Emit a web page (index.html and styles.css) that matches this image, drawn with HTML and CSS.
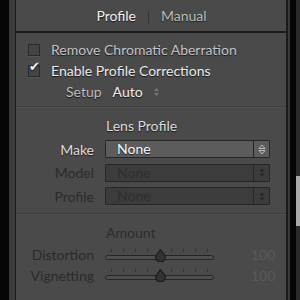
FILE: index.html
```html
<!DOCTYPE html>
<html lang="en">
<head>
  <meta charset="UTF-8" />
  <title>Lens Corrections</title>
  <link rel="stylesheet" href="styles.css">
</head>
<body>

  <div class="edge-black"></div>
  <div class="edge-gray"></div>

  <div class="panel">

    <!-- tabs -->
    <div class="tabs">
      <span class="tab active">Profile</span>
      <span class="tab-sep"></span>
      <span class="tab">Manual</span>
    </div>

    <!-- checkboxes -->
    <div class="section checks">
      <label class="check dim">
        <span class="box"></span>
        Remove Chromatic Aberration
      </label>
      <label class="check">
        <span class="box"><span class="tick">&#10004;</span></span>
        Enable Profile Corrections
      </label>
      <div class="setup">
        <span class="setup-label">Setup</span>
        <span class="setup-value">Auto</span>
        <svg class="updown" width="7" height="10" viewBox="0 0 7 10">
          <path d="M3.5 1 L6 4 H1 Z M3.5 9 L6 6 H1 Z" fill="#777"/>
        </svg>
      </div>
    </div>

    <!-- lens profile -->
    <div class="section lens">
      <div class="row">
        <span class="label"></span>
        <span class="heading">Lens Profile</span>
      </div>
      <div class="row">
        <span class="label">Make</span>
        <div class="select">
          <span class="select-text">None</span>
          <span class="select-arrows">
            <svg width="8" height="11" viewBox="0 0 8 11">
              <path d="M4 1 L7 4.5 H1 Z M4 10 L7 6.5 H1 Z" fill="none" stroke="#bbb" stroke-width="1"/>
            </svg>
          </span>
        </div>
      </div>
      <div class="row off">
        <span class="label">Model</span>
        <div class="select">
          <span class="select-text">None</span>
          <span class="select-arrows">
            <svg width="8" height="11" viewBox="0 0 8 11">
              <path d="M4 1.5 L6.5 4.5 H1.5 Z M4 9.5 L6.5 6.5 H1.5 Z" fill="#222"/>
            </svg>
          </span>
        </div>
      </div>
      <div class="row off">
        <span class="label">Profile</span>
        <div class="select">
          <span class="select-text">None</span>
          <span class="select-arrows">
            <svg width="8" height="11" viewBox="0 0 8 11">
              <path d="M4 1.5 L6.5 4.5 H1.5 Z M4 9.5 L6.5 6.5 H1.5 Z" fill="#222"/>
            </svg>
          </span>
        </div>
      </div>
    </div>

    <!-- amount -->
    <div class="section amount">
      <div class="row">
        <span class="label"></span>
        <span class="heading">Amount</span>
      </div>
      <div class="row">
        <span class="label">Distortion</span>
        <div class="slider">
          <div class="ticks">
            <i></i><i></i><i></i><i></i><i></i><i></i><i></i><i></i><i></i>
          </div>
          <div class="track"></div>
          <svg class="thumb" width="13" height="13" viewBox="0 0 13 13">
            <path d="M6.5 0.8 L11 6.5 A4.8 4.8 0 1 1 2 6.5 Z" fill="#333" stroke="#1c1c1c" stroke-width="1.2"/>
          </svg>
        </div>
        <span class="value">100</span>
      </div>
      <div class="row">
        <span class="label">Vignetting</span>
        <div class="slider">
          <div class="ticks">
            <i></i><i></i><i></i><i></i><i></i><i></i><i></i><i></i><i></i>
          </div>
          <div class="track"></div>
          <svg class="thumb" width="13" height="13" viewBox="0 0 13 13">
            <path d="M6.5 0.8 L11 6.5 A4.8 4.8 0 1 1 2 6.5 Z" fill="#333" stroke="#1c1c1c" stroke-width="1.2"/>
          </svg>
        </div>
        <span class="value">100</span>
      </div>
    </div>

  </div>

  <div class="edge-rail"></div>
  <div class="edge-black right"></div>
  <div class="scrollbar"><div class="scroll-thumb"></div></div>

</body>
</html>
```

FILE: styles.css
```css
/* Lightroom style lens corrections panel */
* {
  box-sizing: border-box;
  margin: 0;
  padding: 0;
}
html, body {
  height: 100%;
}
body {
  display: flex;
  background: #000;
  font-family: "Lato", "Open Sans", sans-serif;
  font-size: 14px;
  color: #d8d8d8;
  overflow: hidden;
}

/* outer strips */
.edge-black {
  width: 9px;
  background: #050505;
}
.edge-black.right {
  width: 6px;
}
.edge-gray {
  width: 6px;
  background: #3a3a3a;
}
.edge-rail {
  width: 2px;
  background: #3a3a3a;
}
.scrollbar {
  width: 4px;
  background: #2a2a2a;
}
.scroll-thumb {
  margin-top: 176px;
  height: 50px;
  background: #a9a9a9;
}

/* the panel */
.panel {
  width: 273px;
  background: #4a4a4a;
  border-left: 1px solid #1b1b1b;
  border-right: 2px solid #1b1b1b;
}

.tabs {
  height: 33px;
  display: flex;
  justify-content: center;
  align-items: center;
  gap: 12px;
  border-bottom: 2px solid #1d1d1d;
  padding-left: 1px;
}
.tab {
  color: #bdbdbd;
  text-shadow: 0 1px 1px #1a1a1a;
}
.tab.active {
  color: #f2f2f2;
}
.tab-sep {
  width: 1px;
  height: 13px;
  background: #353535;
  margin-top: 3px;
}

.section {
  border-bottom: 1px solid #3e3e3e;
  box-shadow: 0 1px 0 #515151;
}

/* checkboxes */
.checks {
  height: 74px;
  padding: 6px 0 0 12px;
}
.check {
  display: flex;
  align-items: center;
  gap: 11px;
  height: 21px;
  color: #ececec;
  text-shadow: 0 1px 1px #151515;
}
.check.dim {
  color: #c4c4c4;
}
.box {
  position: relative;
  width: 12px;
  height: 12px;
  border: 1px solid #2a2a2a;
  background: #444;
  box-shadow: 0 1px 0 #555;
}
.tick {
  position: absolute;
  left: 0;
  top: -7px;
  font-size: 13px;
  color: #f0f0f0;
  font-family: "DejaVu Sans", sans-serif;
}
.setup {
  display: flex;
  align-items: center;
  height: 21px;
  padding-left: 38px;
  text-shadow: 0 1px 1px #151515;
}
.setup-label {
  color: #bdbdbd;
  margin-right: 11px;
}
.setup-value {
  color: #f0f0f0;
  margin-right: 10px;
}

/* label + control rows */
.row {
  display: flex;
  align-items: center;
}
.label {
  width: 78px;
  text-align: right;
  margin-right: 11px;
  flex-shrink: 0;
}
.heading {
  padding-left: 1px;
}

.lens {
  height: 107px;
  padding-top: 7px;
}
.lens .row {
  height: 23.5px;
}
.lens .heading {
  color: #dcdcdc;
  text-shadow: 0 1px 1px #1a1a1a;
}
.lens .label {
  color: #dcdcdc;
  text-shadow: 0 1px 1px #1a1a1a;
}
.select {
  display: flex;
  width: 165px;
  height: 18px;
  border: 1px solid #262626;
  background: #5c5c5c;
  border-radius: 1px;
}
.select-text {
  flex: 1;
  padding-left: 11px;
  line-height: 16px;
  color: #fafafa;
  text-shadow: 0 1px 1px #1a1a1a;
}
.select-arrows {
  width: 16px;
  border-left: 1px solid #262626;
  display: flex;
  align-items: center;
  justify-content: center;
}
.row.off .label {
  color: #2a2a2a;
  text-shadow: none;
}
.row.off .select {
  background: #3c3c3c;
}
.row.off .select-text {
  color: #2e2e2e;
  text-shadow: none;
}

/* amount sliders */
.amount {
  border: none;
  box-shadow: none;
  padding-top: 10px;
}
.amount .row {
  height: 20.5px;
}
.amount .heading {
  color: #2c2c2c;
  margin-bottom: 3px;
}
.amount .label {
  color: #2a2a2a;
}
.slider {
  position: relative;
  width: 109px;
  height: 14px;
}
.ticks {
  display: flex;
  justify-content: space-between;
  padding: 0 6px;
  height: 4px;
  margin-top: 1px;
}
.ticks i {
  width: 1px;
  height: 3px;
  background: #333;
}
.track {
  margin-top: 2px;
  height: 5px;
  border: 1px solid #262626;
  border-radius: 3px;
  background: #4f4f4f;
}
.thumb {
  position: absolute;
  left: 49px;
  top: 1px;
}
.value {
  margin-left: 37px;
  color: #5a5a5a;
}
```
